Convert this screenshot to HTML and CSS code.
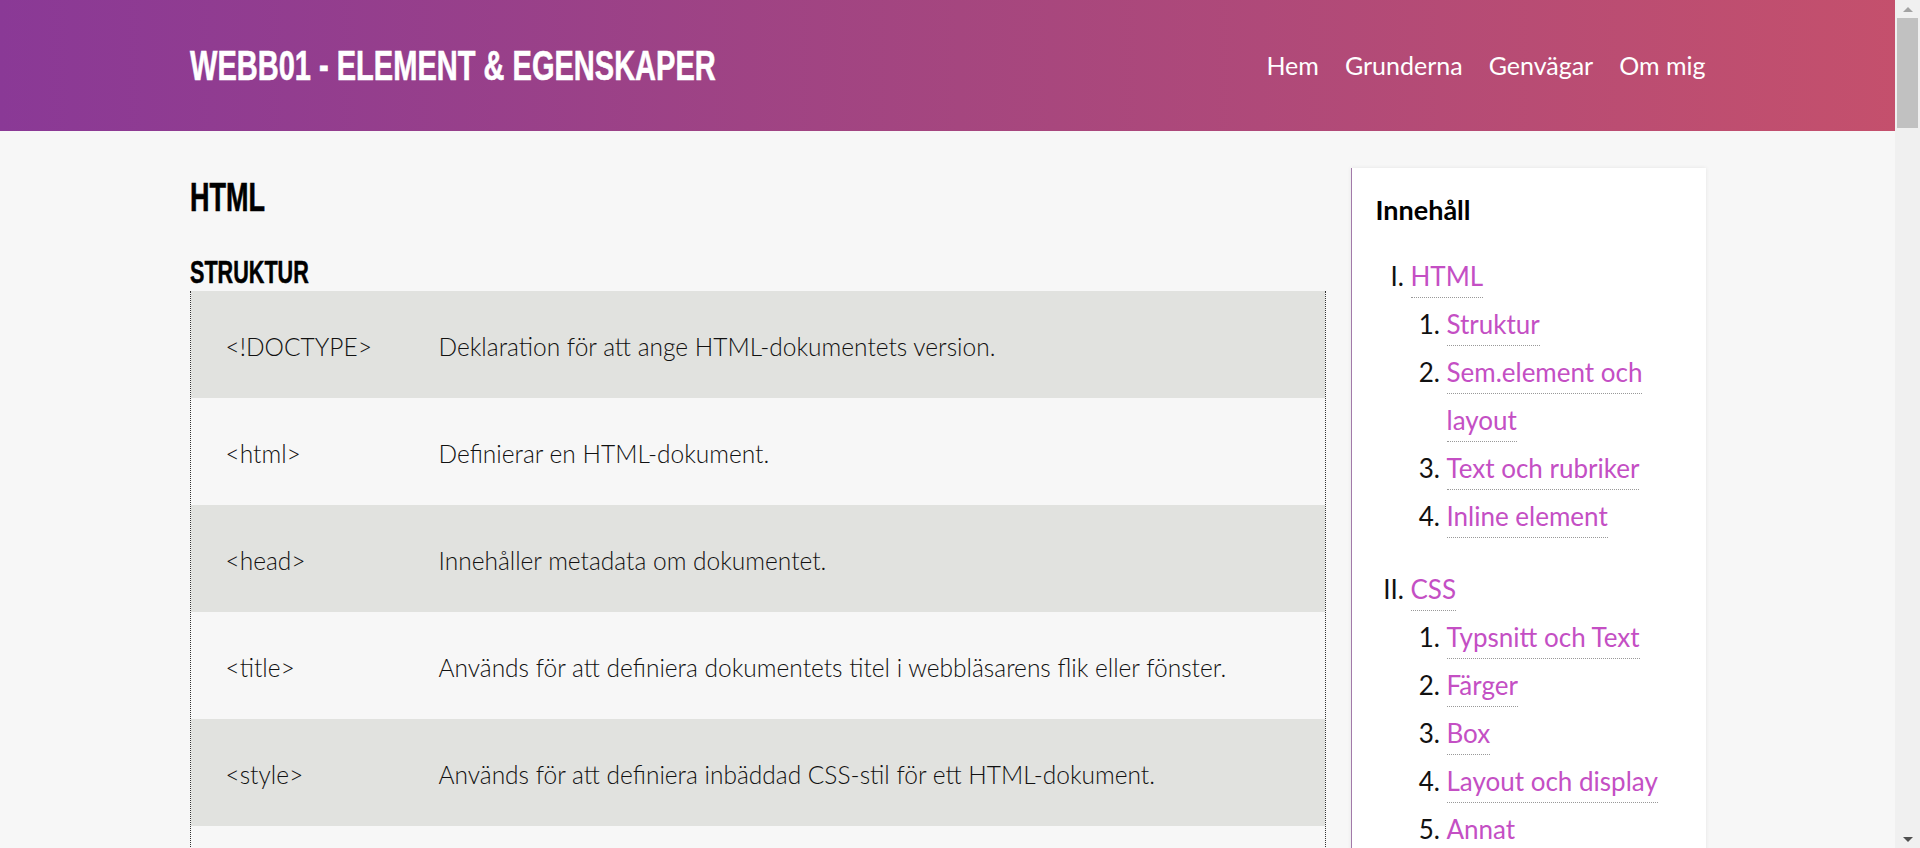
FILE: index.html
```html
<!DOCTYPE html>
<html lang="sv">
<head>
<meta charset="utf-8">
<title>WEBB01 - Element &amp; Egenskaper</title>
<link rel="stylesheet" href="styles.css">
</head>
<body>
<header class="site-header">
  <div class="wrap header-inner">
    <h1 class="site-title"><span class="condensed">WEBB01 - ELEMENT &amp; EGENSKAPER</span></h1>
    <nav class="main-nav">
      <a href="#">Hem</a>
      <a href="#">Grunderna</a>
      <a href="#">Genvägar</a>
      <a href="#">Om mig</a>
    </nav>
  </div>
</header>

<div class="wrap layout">
  <main class="content">
    <section id="html">
      <h2 class="section-title"><span class="condensed">HTML</span></h2>

      <h3 class="sub-title" id="struktur"><span class="condensed">STRUKTUR</span></h3>
      <table class="ref-table">
        <tr><td>&lt;!DOCTYPE&gt;</td><td>Deklaration för att ange HTML-dokumentets version.</td></tr>
        <tr><td>&lt;html&gt;</td><td>Definierar en HTML-dokument.</td></tr>
        <tr><td>&lt;head&gt;</td><td>Innehåller metadata om dokumentet.</td></tr>
        <tr><td>&lt;title&gt;</td><td>Används för att definiera dokumentets titel i webbläsarens flik eller fönster.</td></tr>
        <tr><td>&lt;style&gt;</td><td>Används för att definiera inbäddad CSS-stil för ett HTML-dokument.</td></tr>
        <tr><td>&lt;link&gt;</td><td>Används för att länka till en extern resurs, till exempel en stilmall.</td></tr>
        <tr><td>&lt;meta&gt;</td><td>Anger metadata som teckenkodning, beskrivning och viewport.</td></tr>
        <tr><td>&lt;body&gt;</td><td>Innehåller allt synligt innehåll på sidan.</td></tr>
      </table>

      <h3 class="sub-title" id="sem"><span class="condensed">SEM.ELEMENT OCH LAYOUT</span></h3>
      <table class="ref-table">
        <tr><td>&lt;header&gt;</td><td>Definierar ett sidhuvud för ett dokument eller en sektion.</td></tr>
        <tr><td>&lt;nav&gt;</td><td>Definierar en samling navigeringslänkar.</td></tr>
        <tr><td>&lt;main&gt;</td><td>Anger dokumentets huvudsakliga innehåll.</td></tr>
        <tr><td>&lt;section&gt;</td><td>Definierar en tematisk sektion i ett dokument.</td></tr>
        <tr><td>&lt;article&gt;</td><td>Definierar ett självständigt innehåll, till exempel ett inlägg.</td></tr>
        <tr><td>&lt;aside&gt;</td><td>Definierar innehåll vid sidan av huvudinnehållet.</td></tr>
        <tr><td>&lt;footer&gt;</td><td>Definierar en sidfot för ett dokument eller en sektion.</td></tr>
      </table>

      <h3 class="sub-title" id="text"><span class="condensed">TEXT OCH RUBRIKER</span></h3>
      <table class="ref-table">
        <tr><td>&lt;h1&gt; - &lt;h6&gt;</td><td>Definierar rubriker i sex olika nivåer.</td></tr>
        <tr><td>&lt;p&gt;</td><td>Definierar ett textstycke.</td></tr>
        <tr><td>&lt;br&gt;</td><td>Infogar en radbrytning.</td></tr>
        <tr><td>&lt;hr&gt;</td><td>Infogar en tematisk brytning, visas som en linje.</td></tr>
        <tr><td>&lt;blockquote&gt;</td><td>Definierar ett längre citat från en annan källa.</td></tr>
        <tr><td>&lt;ul&gt; / &lt;ol&gt;</td><td>Definierar en punktlista respektive en numrerad lista.</td></tr>
      </table>

      <h3 class="sub-title" id="inline"><span class="condensed">INLINE ELEMENT</span></h3>
      <table class="ref-table">
        <tr><td>&lt;a&gt;</td><td>Definierar en hyperlänk.</td></tr>
        <tr><td>&lt;span&gt;</td><td>Ett generellt inline-element utan semantisk betydelse.</td></tr>
        <tr><td>&lt;strong&gt;</td><td>Markerar viktig text, visas i fetstil.</td></tr>
        <tr><td>&lt;em&gt;</td><td>Markerar betonad text, visas i kursiv stil.</td></tr>
        <tr><td>&lt;img&gt;</td><td>Används för att bädda in en bild.</td></tr>
      </table>
    </section>

    <section id="css" class="section">
      <h2 class="section-title"><span class="condensed">CSS</span></h2>

      <h3 class="sub-title" id="typsnitt"><span class="condensed">TYPSNITT OCH TEXT</span></h3>
      <table class="ref-table">
        <tr><td>font-family</td><td>Anger vilket typsnitt texten ska visas med.</td></tr>
        <tr><td>font-size</td><td>Anger textens storlek.</td></tr>
        <tr><td>font-weight</td><td>Anger hur fet texten ska vara.</td></tr>
        <tr><td>line-height</td><td>Anger radavståndet.</td></tr>
        <tr><td>text-align</td><td>Anger textens justering.</td></tr>
      </table>

      <h3 class="sub-title" id="farger"><span class="condensed">FÄRGER</span></h3>
      <table class="ref-table">
        <tr><td>color</td><td>Anger textens färg.</td></tr>
        <tr><td>background-color</td><td>Anger bakgrundsfärgen för ett element.</td></tr>
        <tr><td>opacity</td><td>Anger hur genomskinligt ett element är.</td></tr>
        <tr><td>rgba()</td><td>Anger en färg med röd, grön, blå och alfa.</td></tr>
      </table>

      <h3 class="sub-title" id="box"><span class="condensed">BOX</span></h3>
      <table class="ref-table">
        <tr><td>width</td><td>Anger ett elements bredd.</td></tr>
        <tr><td>margin</td><td>Anger yttre avstånd runt ett element.</td></tr>
        <tr><td>padding</td><td>Anger inre avstånd i ett element.</td></tr>
        <tr><td>border</td><td>Anger en ram runt ett element.</td></tr>
        <tr><td>box-sizing</td><td>Anger hur bredd och höjd beräknas.</td></tr>
      </table>

      <h3 class="sub-title" id="layout"><span class="condensed">LAYOUT OCH DISPLAY</span></h3>
      <table class="ref-table">
        <tr><td>display</td><td>Anger hur ett element ska visas.</td></tr>
        <tr><td>position</td><td>Anger hur ett element ska positioneras.</td></tr>
        <tr><td>float</td><td>Låter ett element flyta åt vänster eller höger.</td></tr>
        <tr><td>flex</td><td>Anger hur ett flexobjekt växer och krymper.</td></tr>
      </table>

      <h3 class="sub-title" id="annat"><span class="condensed">ANNAT</span></h3>
      <table class="ref-table">
        <tr><td>:hover</td><td>Väljer ett element när muspekaren är över det.</td></tr>
        <tr><td>@media</td><td>Används för att skapa responsiva stilar.</td></tr>
        <tr><td>transition</td><td>Skapar mjuka övergångar mellan värden.</td></tr>
      </table>
    </section>
  </main>

  <aside class="toc">
    <h3 class="toc-title">Innehåll</h3>
    <ol class="toc-list">
      <li><a href="#html">HTML</a>
        <ol class="toc-sub">
          <li><a href="#struktur">Struktur</a></li>
          <li><a href="#sem">Sem.element och layout</a></li>
          <li><a href="#text">Text och rubriker</a></li>
          <li><a href="#inline">Inline element</a></li>
        </ol>
      </li>
      <li><a href="#css">CSS</a>
        <ol class="toc-sub">
          <li><a href="#typsnitt">Typsnitt och Text</a></li>
          <li><a href="#farger">Färger</a></li>
          <li><a href="#box">Box</a></li>
          <li><a href="#layout">Layout och display</a></li>
          <li><a href="#annat">Annat</a></li>
        </ol>
      </li>
    </ol>
  </aside>
</div>

<div class="page-scrollbar" aria-hidden="true">
  <span class="sb-btn sb-up"></span>
  <span class="sb-thumb"></span>
  <span class="sb-track"></span>
  <span class="sb-btn sb-down"></span>
</div>
</body>
</html>
```

FILE: styles.css
```css
html, body {
  margin: 0;
  padding: 0;
}

body {
  background: #f7f7f7;
  color: #222;
  font-family: Lato, "Open Sans", sans-serif;
  --sb: 25px;
}

.wrap {
  width: calc((100% - var(--sb)) * 0.8);
  margin-left: calc((100% - var(--sb)) * 0.1);
}

/* Header */
.site-header {
  height: 131px;
  background: linear-gradient(90deg, #8a3996 0%, #a5467f 50%, #c5506c 100%);
}

.header-inner {
  height: 100%;
  display: flex;
  align-items: center;
  justify-content: space-between;
}

.site-title {
  margin: 0;
  color: #fff;
  font: 700 43px/1 "Liberation Sans", Arial, sans-serif;
  white-space: nowrap;
  -webkit-text-stroke: 0.6px #fff;
}

.condensed {
  display: inline-block;
  transform: scaleX(0.675);
  transform-origin: 0 50%;
  white-space: nowrap;
}

.main-nav {
  display: flex;
  gap: 26px;
}

.main-nav a {
  color: #fff;
  text-decoration: none;
  font-size: 25px;
  line-height: 1;
}

/* Layout */
.layout {
  display: grid;
  grid-template-columns: 1fr 355px;
  column-gap: 25px;
  align-items: start;
  padding-top: 37px;
  padding-bottom: 60px;
}

.section + .section {
  margin-top: 60px;
}

.section-title {
  margin: 5px 0 0;
  font: 700 40px/48px "Liberation Sans", Arial, sans-serif;
  color: #000;
  -webkit-text-stroke: 0.6px #000;
}

.sub-title {
  margin: 32px 0 0;
  font: 700 32px/38px "Liberation Sans", Arial, sans-serif;
  color: #000;
  -webkit-text-stroke: 0.5px #000;
}

.ref-table + .sub-title {
  margin-top: 48px;
}

/* Table */
.ref-table {
  width: 100%;
  border-collapse: separate;
  border-spacing: 0;
  table-layout: fixed;
  border-left: 1px dotted #333;
  border-right: 1px dotted #333;
  font-weight: 300;
  font-size: 24.5px;
  line-height: 35px;
  color: #111;
}

.ref-table tr:nth-child(odd) {
  background: #e1e2df;
}

.ref-table td {
  box-sizing: border-box;
  padding: 38px 20px 34px 35px;
  vertical-align: top;
}

.ref-table td:first-child {
  width: 213px;
  padding-right: 0;
}

/* Table of contents */
.toc {
  background: #fff;
  border-left: 1px solid #a27aa9;
  box-shadow: 0 0 4px rgba(0, 0, 0, 0.08);
  padding: 24px 24px 40px 24px;
}

.toc-title {
  margin: 0;
  font-size: 27px;
  line-height: 36px;
  font-weight: 700;
  color: #000;
}

.toc-list {
  list-style: upper-roman;
  margin: 24px 0 0;
  padding-left: 35px;
  font-size: 26px;
  line-height: 48px;
  color: #111;
}

.toc-list > li + li {
  margin-top: 25px;
}

.toc-sub {
  list-style: decimal;
  margin: 0;
  padding-left: 36px;
}

.toc a {
  color: #c44fc4;
  text-decoration: none;
  border-bottom: 1px dotted #999;
  padding-bottom: 5px;
}

/* Window scrollbar, drawn over the right edge */
.page-scrollbar {
  position: fixed;
  top: 0;
  right: 0;
  width: var(--sb);
  height: 100vh;
  background: #f0f0f0;
  display: flex;
  flex-direction: column;
}

.sb-btn {
  height: 18px;
  display: flex;
  align-items: center;
  justify-content: center;
}

.sb-btn::before {
  content: "";
  width: 0;
  height: 0;
  border-left: 5px solid transparent;
  border-right: 5px solid transparent;
}

.sb-up::before {
  border-bottom: 5px solid #a3a3a3;
}

.sb-down::before {
  border-top: 5px solid #505050;
}

.sb-thumb {
  height: 110px;
  margin: 0 2px;
  background: #c1c1c1;
}

.sb-track {
  flex: 1;
}
```
